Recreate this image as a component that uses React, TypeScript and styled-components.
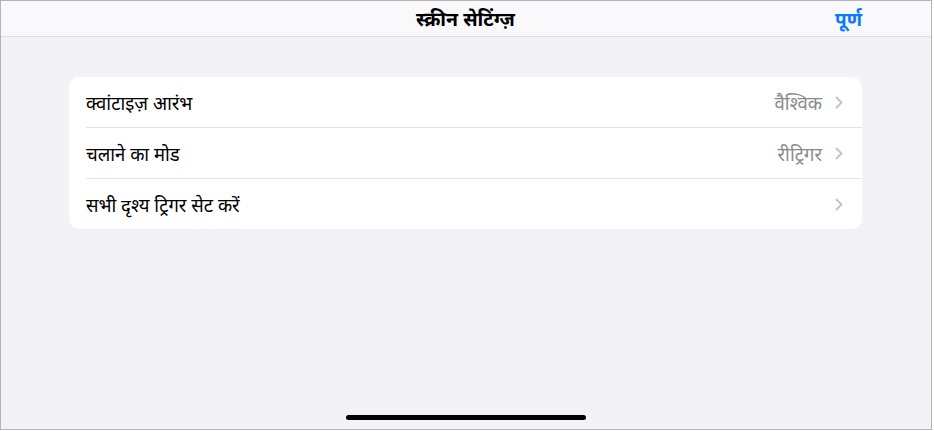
import React from 'react';
import styled, { createGlobalStyle } from 'styled-components';

const GlobalStyle = createGlobalStyle`
  html, body {
    margin: 0;
    padding: 0;
    background: #ffffff;
  }
  body {
    font-family: "Noto Sans", "Noto Sans Devanagari", "Lohit Devanagari", sans-serif;
    -webkit-font-smoothing: antialiased;
  }
`;

const Screen = styled.div`
  width: 932px;
  height: 430px;
  box-sizing: border-box;
  border: 1px solid #b4b4b8;
  background: #f2f2f7;
  display: flex;
  flex-direction: column;
  overflow: hidden;
`;

const NavBar = styled.header`
  height: 35px;
  flex-shrink: 0;
  background: #f9f9fb;
  border-bottom: 1px solid #dcdce0;
  display: grid;
  grid-template-columns: 1fr auto 1fr;
  align-items: center;
  padding: 0 69px 0 68px;
`;

const NavTitle = styled.h1`
  grid-column: 2;
  margin: 0;
  font-size: 19.5px;
  font-weight: 700;
  color: #000;
`;

const DoneButton = styled.button`
  grid-column: 3;
  justify-self: end;
  background: none;
  border: none;
  padding: 0;
  font-family: inherit;
  font-size: 19px;
  font-weight: 700;
  color: #0a7aff;
  cursor: pointer;
`;

const Content = styled.main`
  flex: 1;
  padding: 40px 69px 0 68px;
  display: flex;
  flex-direction: column;
`;

const Group = styled.ul`
  list-style: none;
  margin: 0;
  padding: 0 0 0 17px;
  background: #ffffff;
  border-radius: 10px;
`;

const Row = styled.li`
  height: 50px;
  display: flex;
  align-items: center;
  padding-right: 19px;
  border-bottom: 1px solid #e4e4e8;

  &:last-child {
    border-bottom: none;
  }
`;

const Label = styled.span`
  flex: 1;
  font-size: 18.5px;
  color: #000;
`;

const Value = styled.span`
  font-size: 18.5px;
  color: #8a8a8e;
  margin-right: 13px;
`;

const Chevron = styled.svg`
  width: 8px;
  height: 13px;
  flex-shrink: 0;
`;

const HomeBar = styled.div`
  align-self: center;
  width: 240px;
  height: 5px;
  border-radius: 3px;
  background: #000;
  margin: 0 0 9px 0;
`;

const rows = [
  { label: 'क्वांटाइज़ आरंभ', value: 'वैश्विक' },
  { label: 'चलाने का मोड', value: 'रीट्रिगर' },
  { label: 'सभी दृश्य ट्रिगर सेट करें', value: '' },
];

const App: React.FC = () => (
  <>
    <GlobalStyle />
    <Screen>
      <NavBar>
        <NavTitle>स्क्रीन सेटिंग्ज़</NavTitle>
        <DoneButton>पूर्ण</DoneButton>
      </NavBar>
      <Content>
        <Group>
          {rows.map((row) => (
            <Row key={row.label}>
              <Label>{row.label}</Label>
              {row.value && <Value>{row.value}</Value>}
              <Chevron viewBox="0 0 8 13">
                <path d="M1.5 1.5 L6.5 6.5 L1.5 11.5" fill="none" stroke="#c4c4c7" strokeWidth="1.8" strokeLinecap="round" strokeLinejoin="round" />
              </Chevron>
            </Row>
          ))}
        </Group>
        <div style={{ flex: 1 }} />
        <HomeBar />
      </Content>
    </Screen>
  </>
);

export default App;
